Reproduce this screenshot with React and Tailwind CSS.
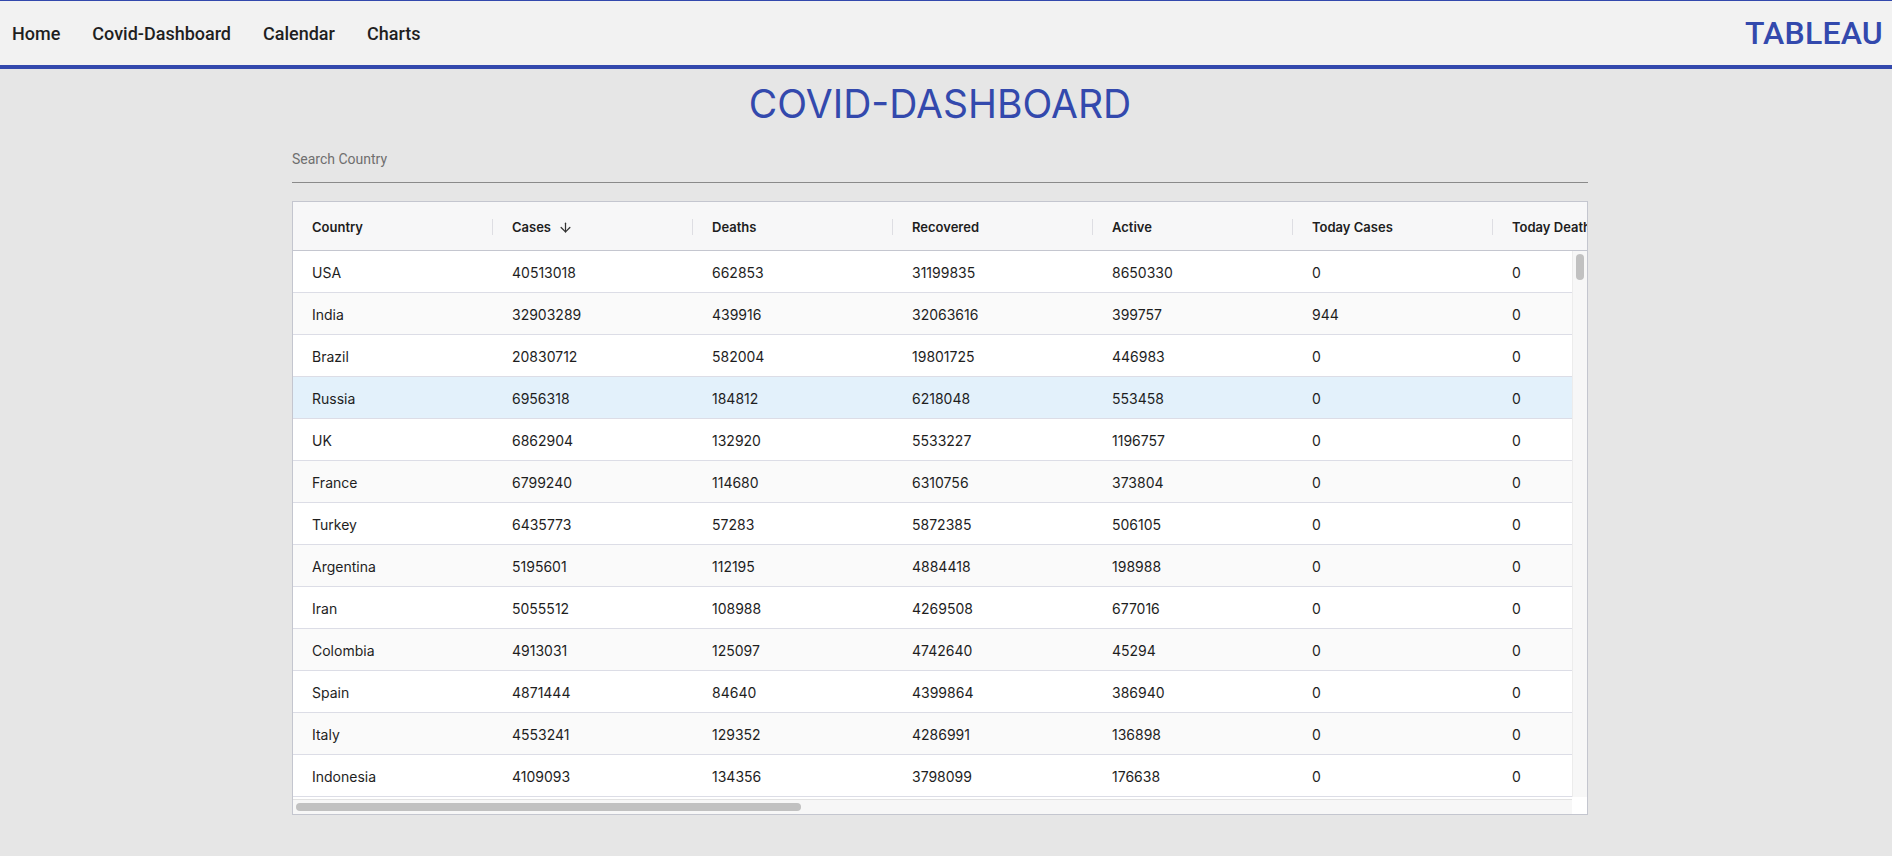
import React from "react";
import { ArrowDown } from "lucide-react";

const rows = [
  ["USA", 40513018, 662853, 31199835, 8650330, 0, 0],
  ["India", 32903289, 439916, 32063616, 399757, 944, 0],
  ["Brazil", 20830712, 582004, 19801725, 446983, 0, 0],
  ["Russia", 6956318, 184812, 6218048, 553458, 0, 0],
  ["UK", 6862904, 132920, 5533227, 1196757, 0, 0],
  ["France", 6799240, 114680, 6310756, 373804, 0, 0],
  ["Turkey", 6435773, 57283, 5872385, 506105, 0, 0],
  ["Argentina", 5195601, 112195, 4884418, 198988, 0, 0],
  ["Iran", 5055512, 108988, 4269508, 677016, 0, 0],
  ["Colombia", 4913031, 125097, 4742640, 45294, 0, 0],
  ["Spain", 4871444, 84640, 4399864, 386940, 0, 0],
  ["Italy", 4553241, 129352, 4286991, 136898, 0, 0],
  ["Indonesia", 4109093, 134356, 3798099, 176638, 0, 0],
];

const headers = ["Country", "Cases", "Deaths", "Recovered", "Active", "Today Cases", "Today Deaths", "Critical"];

export default function App() {
  return (
    <div className="h-screen overflow-hidden bg-[#e6e6e6]" style={{ fontFamily: "Roboto, 'Liberation Sans', sans-serif" }}>
      <nav className="border-t border-[#3349ad] bg-[#f2f2f2] border-b-4 border-b-[#3349ad] h-[69px] flex items-center justify-between pl-3 pr-[9px]">
        <div className="flex items-center gap-8 text-[18px] font-medium text-[#1f1f1f]">
          <span>Home</span>
          <span>Covid-Dashboard</span>
          <span>Calendar</span>
          <span>Charts</span>
        </div>
        <div className="text-[32px] font-medium text-[#3349ad] tracking-[0.2px]">TABLEAU</div>
      </nav>

      <div className="w-[1296px] ml-[292px]">
        <h1 className="text-center text-[39px] leading-[48px] text-[#3349ad] mt-[11px]" style={{ fontFamily: "Inter, 'Liberation Sans', sans-serif" }}>
          COVID-DASHBOARD
        </h1>
        <div className="mt-[17px] h-[38px] border-b border-[#8a8a8a] flex items-start">
          <span className="text-[14px] text-[#6f6f6f] mt-[4px]">Search Country</span>
        </div>

        <div className="mt-[18px] border border-[#c4c6cf] bg-white overflow-hidden" style={{ fontFamily: "Inter, 'Liberation Sans', sans-serif" }}>
          <div className="h-[49px] bg-[#f7f7f8] border-b border-[#c4c6cf] flex overflow-hidden">
            {headers.map((h, i) => (
              <div key={h} className="w-[200px] shrink-0 flex items-center justify-between">
                <div className="pl-[19px] pt-[3px] flex items-center gap-[7px] text-[13px] font-semibold text-[#1e1e1e] whitespace-nowrap">
                  {h}
                  {i === 1 && <ArrowDown size={15} strokeWidth={2} className="text-[#333]" />}
                </div>
                <div className="w-px h-[16px] mt-[2px] bg-[#dedee3]" />
              </div>
            ))}
          </div>
          <div className="flex">
            <div className="flex-1 overflow-hidden">
              {rows.map((r, ri) => (
                <div
                  key={r[0]}
                  className={
                    "h-[42px] pt-[2px] border-b border-[#dcdde6] flex text-[14px] text-[#1e1e1e] " +
                    (r[0] === "Russia" ? "bg-[#e3f1fb]" : ri % 2 === 1 ? "bg-[#fafafa]" : "bg-white")
                  }
                >
                  {r.map((c, ci) => (
                    <div key={ci} className="w-[200px] shrink-0 pl-[19px] flex items-center whitespace-nowrap">{c}</div>
                  ))}
                  <div className="w-[200px] shrink-0 pl-[19px] flex items-center">0</div>
                </div>
              ))}
            </div>
            <div className="w-[15px] shrink-0 bg-[#f7f7f7] border-l border-[#ececec] pt-[3px] flex justify-center">
              <div className="w-[8px] h-[26px] rounded-full bg-[#c1c1c1]" />
            </div>
          </div>
          <div className="flex h-[17px]">
            <div className="flex-1 bg-[#f7f7f7] border-t border-[#e2e2e2] mt-[2px] pt-[3px] pl-[3px]">
              <div className="w-[505px] h-[8px] rounded-full bg-[#c1c1c1]" />
            </div>
            <div className="w-[15px] bg-white" />
          </div>
        </div>
      </div>
    </div>
  );
}
